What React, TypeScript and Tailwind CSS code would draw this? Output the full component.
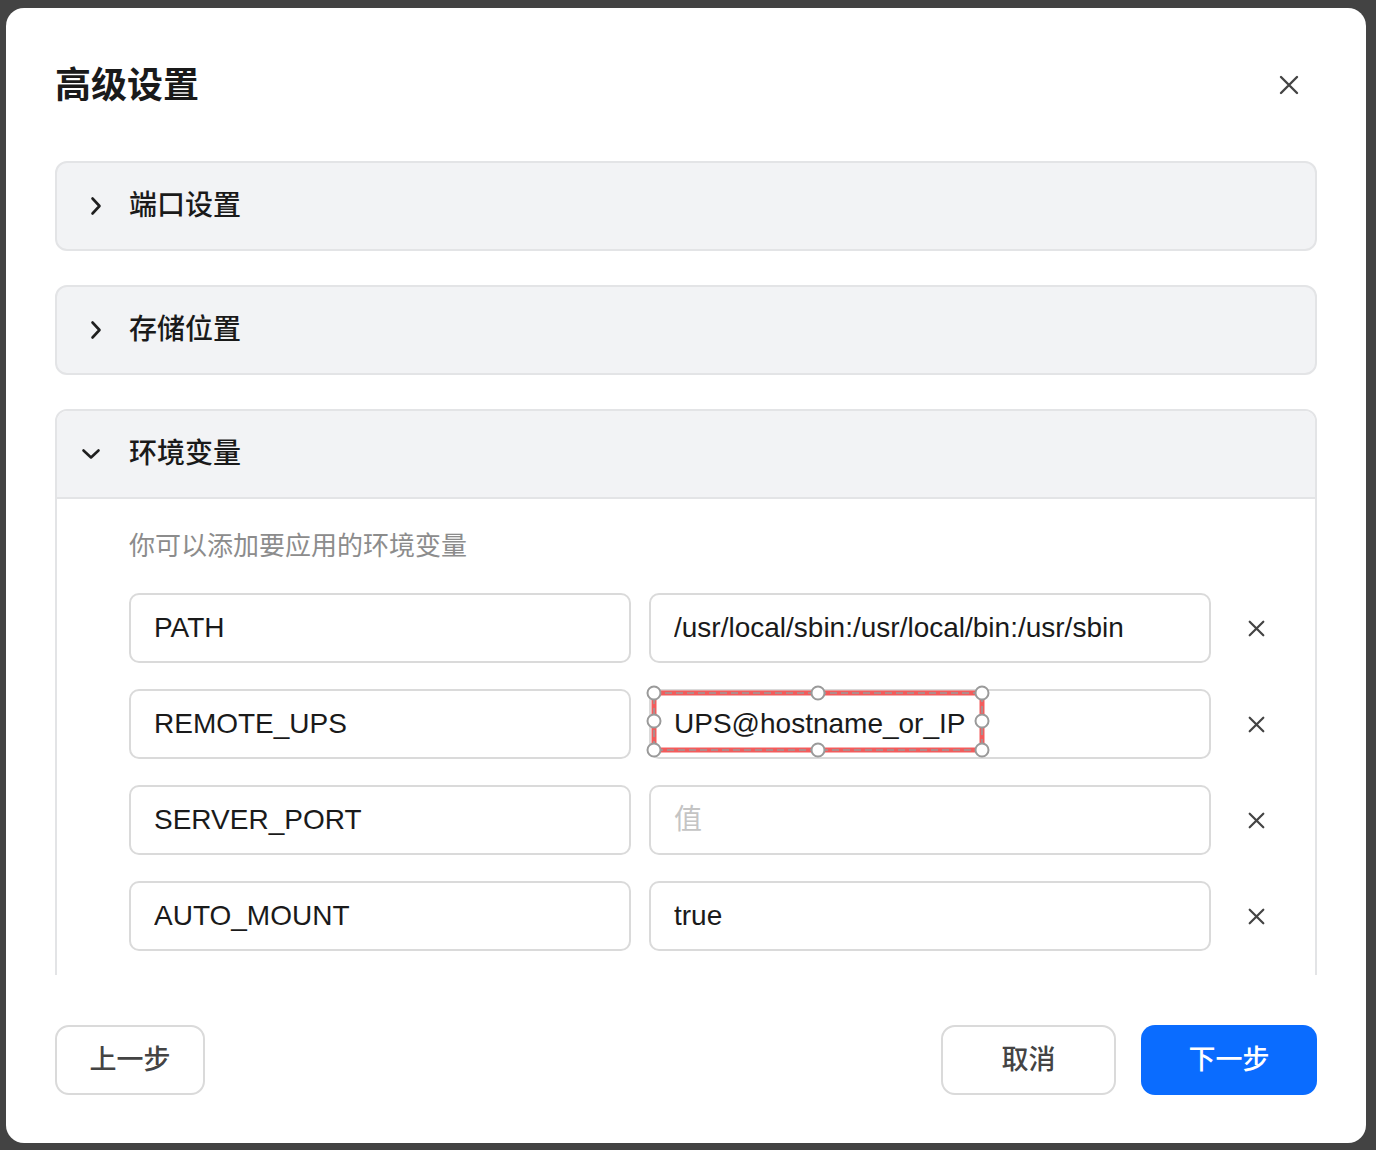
import { useState } from 'react';

type EnvVar = { key: string; value: string };

const FONT = { fontFamily: '"Liberation Sans", "Noto Sans CJK SC", sans-serif' };

function ChevronRight() {
  return (
    <svg width="24" height="24" viewBox="0 0 24 24" fill="none">
      <path d="M8.5 4.5 L15.5 12 L8.5 19.5" stroke="#1f1f1f" strokeWidth="2.6" strokeLinecap="round" strokeLinejoin="round" />
    </svg>
  );
}

function ChevronDown() {
  return (
    <svg width="24" height="24" viewBox="0 0 24 24" fill="none">
      <path d="M4.5 8.5 L12 15.5 L19.5 8.5" stroke="#1f1f1f" strokeWidth="2.6" strokeLinecap="round" strokeLinejoin="round" />
    </svg>
  );
}

function Cross({ size, width }: { size: number; width: number }) {
  return (
    <svg width={size} height={size} viewBox="0 0 20 20" fill="none">
      <path d="M2 2 L18 18 M18 2 L2 18" stroke="#444444" strokeWidth={width} strokeLinecap="round" />
    </svg>
  );
}

// selection frame drawn over the REMOTE_UPS value
function SelectionFrame() {
  const pts = [
    [15, 14], [179, 14], [343, 14],
    [15, 42], [343, 42],
    [15, 71], [179, 71], [343, 71],
  ];
  return (
    <svg className="absolute left-[-10px] top-[-10px] pointer-events-none" width="360" height="86" viewBox="0 0 360 86" fill="none">
      <rect x="15" y="14" width="328" height="57" stroke="#f25c5c" strokeWidth="5" />
      <rect x="15" y="14" width="328" height="57" stroke="#9a9a9a" strokeWidth="1.5" strokeDasharray="7 4" />
      {pts.map(([x, y], i) => (
        <circle key={i} cx={x} cy={y} r="6.5" fill="#ffffff" stroke="#9a9a9a" strokeWidth="2" />
      ))}
    </svg>
  );
}

function Section({ title }: { title: string }) {
  return (
    <div className="flex-none h-[90px] border-2 border-[#e3e4e6] rounded-[12px] bg-[#f2f3f5] flex items-center pl-[27px]">
      <ChevronRight />
      <span className="ml-[21px] text-[28px] font-medium text-[#1a1a1a]">{title}</span>
    </div>
  );
}

export default function App() {
  const [vars, setVars] = useState<EnvVar[]>([
    { key: 'PATH', value: '/usr/local/sbin:/usr/local/bin:/usr/sbin' },
    { key: 'REMOTE_UPS', value: 'UPS@hostname_or_IP' },
    { key: 'SERVER_PORT', value: '' },
    { key: 'AUTO_MOUNT', value: 'true' },
  ]);

  const update = (i: number, field: 'key' | 'value', v: string) =>
    setVars((prev) => prev.map((row, idx) => (idx === i ? { ...row, [field]: v } : row)));

  const remove = (i: number) => setVars((prev) => prev.filter((_, idx) => idx !== i));

  return (
    <div className="w-full h-[1150px] bg-[#434343] pt-[8px] pl-[6px]" style={FONT}>
      <div className="w-[1360px] h-[1135px] bg-white rounded-[18px] flex flex-col px-[49px]">
        <div className="h-[153px] flex-none flex items-center justify-between">
          <h1 className="text-[36px] font-bold text-[#1a1a1a] pt-[2px]">高级设置</h1>
          <button className="w-[56px] h-[56px] flex items-center justify-center">
            <Cross size={20} width={2.4} />
          </button>
        </div>

        <div className="h-[814px] flex-none overflow-hidden flex flex-col gap-[34px]">
          <Section title="端口设置" />
          <Section title="存储位置" />

          <div className="flex-none border-2 border-[#e3e4e6] rounded-[12px] bg-white">
            <div className="h-[88px] bg-[#f2f3f5] rounded-t-[10px] border-b-2 border-[#e3e4e6] flex items-center pl-[22px]">
              <ChevronDown />
              <span className="ml-[26px] text-[28px] font-medium text-[#1a1a1a]">环境变量</span>
            </div>
            <div className="pl-[72px] pt-[29px] pb-[40px]">
              <p className="text-[26px] leading-[36px] text-[#8c8c8c]">你可以添加要应用的环境变量</p>
              <div className="mt-[29px] flex flex-col gap-[26px]">
                {vars.map((row, i) => (
                  <div key={i} className="flex items-center">
                    <input
                      value={row.key}
                      onChange={(e) => update(i, 'key', e.target.value)}
                      placeholder="键"
                      className="w-[502px] h-[70px] border-2 border-[#dadada] rounded-[10px] px-[23px] text-[28px] text-[#1a1a1a] placeholder:text-[#c4c4c4] outline-none"
                    />
                    <div className="relative ml-[18px]">
                      <input
                        value={row.value}
                        onChange={(e) => update(i, 'value', e.target.value)}
                        placeholder="值"
                        className="w-[562px] h-[70px] border-2 border-[#dadada] rounded-[10px] px-[23px] text-[28px] text-[#1a1a1a] placeholder:text-[#c4c4c4] outline-none"
                      />
                      {row.key === 'REMOTE_UPS' && <SelectionFrame />}
                    </div>
                    <button onClick={() => remove(i)} className="w-[90px] h-[70px] flex items-center justify-center">
                      <Cross size={17} width={2.6} />
                    </button>
                  </div>
                ))}
              </div>
            </div>
          </div>
        </div>

        <div className="flex-none pt-[50px] flex items-center justify-between">
          <button className="w-[150px] h-[70px] border-2 border-[#dadada] rounded-[14px] text-[27px] font-medium text-[#444444]">上一步</button>
          <div className="flex gap-[25px]">
            <button className="w-[175px] h-[70px] border-2 border-[#dadada] rounded-[14px] text-[27px] font-medium text-[#444444]">取消</button>
            <button className="w-[176px] h-[70px] rounded-[14px] bg-[#0a6cff] text-[27px] font-medium text-white">下一步</button>
          </div>
        </div>
      </div>
    </div>
  );
}
